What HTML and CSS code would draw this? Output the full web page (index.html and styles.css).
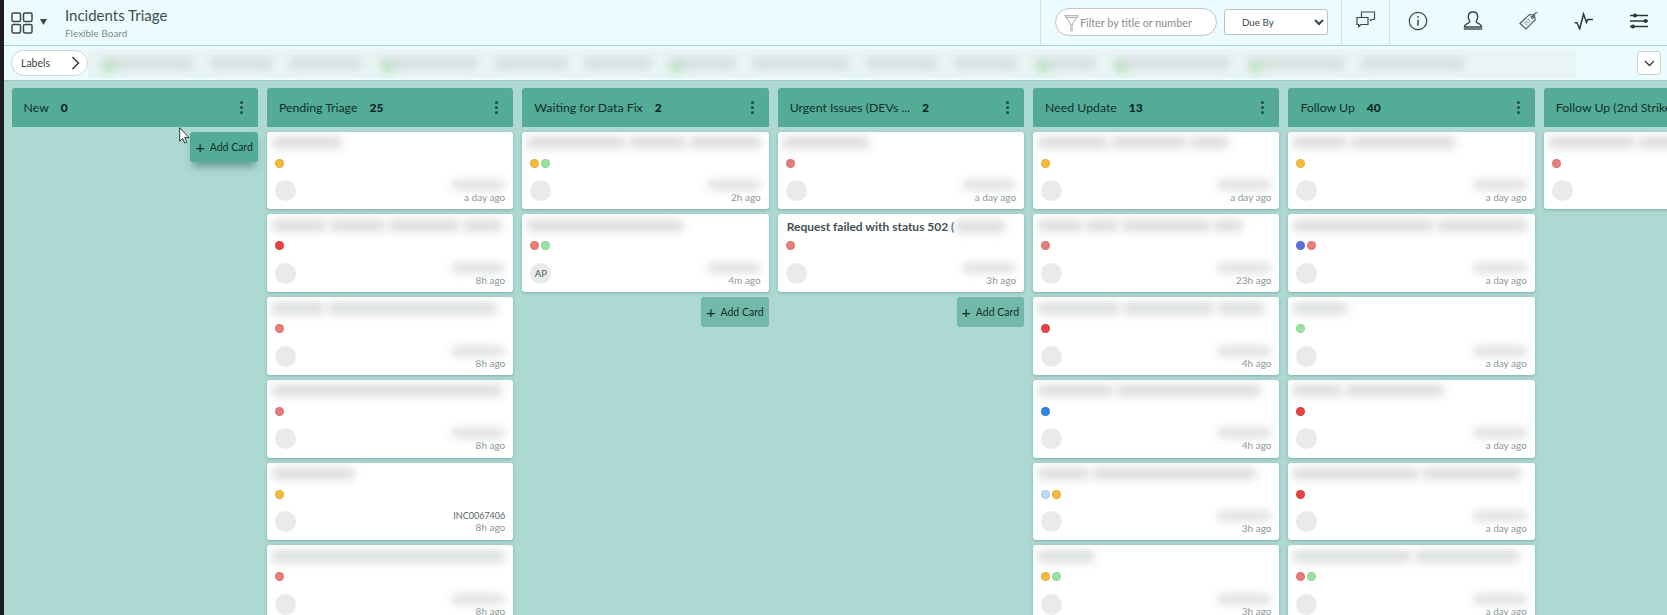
FILE: index.html
```html
<!DOCTYPE html>
<html lang="en">
<head>
<meta charset="utf-8">
<title>Incidents Triage</title>
<link rel="stylesheet" href="styles.css">
</head>
<body>
<div class="page">
  <div class="edge"></div>
  <div class="main">
    <header class="topbar">
      <div class="brand">
        <svg class="board-icon" width="22" height="22" viewBox="0 0 22 22" fill="none" stroke="#39474a" stroke-width="1.5"><rect x="1" y="1" width="8.5" height="8.5" rx="1.5"/><rect x="12.5" y="1" width="8.5" height="8.5" rx="1.5"/><rect x="1" y="12.5" width="8.5" height="8.5" rx="1.5"/><rect x="12.5" y="12.5" width="8.5" height="8.5" rx="1.5"/></svg>
        <svg class="caret" width="7" height="6" viewBox="0 0 7 6"><path d="M0 0h7L3.5 6z" fill="#39474a"/></svg>
        <div class="titles">
          <div class="board-title">Incidents Triage</div>
          <div class="board-sub">Flexible Board</div>
        </div>
      </div>
      <div class="filters">
        <label class="search">
          <svg width="15" height="17" viewBox="0 0 15 17" fill="none" stroke="#a3abab" stroke-width="1"><path d="M.7.7h13.6L8.8 8v2H6.2V8z"/><path d="M2 2.6h11"/><rect x="6" y="10.5" width="3" height="6" fill="#c9cfcf" stroke="none"/></svg>
          <input class="search-input" type="text" placeholder="Filter by title or number">
        </label>
        <select class="sort"><option>Due By</option></select>
      </div>
      <div class="tool-chat">
        <svg width="20" height="17" viewBox="0 0 20 17" fill="none" stroke="#39474a" stroke-width="1.2"><path d="M1 6.5h11v7H5l-2.3 2.2V13.500H1z"/><path d="M5.500 6V1h13v7.500h-2.600"/><path d="M16.500 8.300l-1.600 2.400-1.500-2.400" fill="#39474a" stroke="none"/></svg>
      </div>
      <div class="tools">
        <span class="tool-icon"><svg width="20" height="20" viewBox="0 0 20 20" fill="none" stroke="#39474a" stroke-width="1.200"><circle cx="10" cy="10" r="8.700"/><path d="M10 8.800v6" stroke-width="1.500"/><circle cx="10" cy="5.800" r=".9" fill="#39474a" stroke="none"/></svg></span>
        <span class="tool-icon"><svg width="20" height="19" viewBox="0 0 20 19" fill="none" stroke="#39474a" stroke-width="1.400"><path d="M6.800 10.500c-1-1.500-1.500-3-1.500-4.800C5.300 2.800 7.200 1 10 1s4.700 1.800 4.700 4.700c0 1.800-.5 3.300-1.500 4.800 0 1.300 2 1.800 3.500 2.600 1.200.6 1.800 1.600 1.800 2.900H1.500c0-1.300.6-2.300 1.800-2.900 1.500-.8 3.500-1.300 3.500-2.600z"/><path d="M.8 18h18.400"/></svg></span>
        <span class="tool-icon"><svg width="20" height="20" viewBox="0 0 20 20" fill="none" stroke="#4c5d60" stroke-width="1.200"><path d="M1 12.500L10.500 3.500l5 .5.600 4.800-9 9.200z"/><circle cx="13.300" cy="6.300" r="1.100"/><path d="M13.800 5.600C14.800 3.500 16.500 1.500 18.500 1.500"/><path d="M5.500 11.500l3 3M7.200 9.800l3 3M9 8.200l3 3" stroke-dasharray="1 1"/></svg></span>
        <span class="tool-icon"><svg width="20" height="18" viewBox="0 0 20 18" fill="none" stroke="#27383a" stroke-width="1.500"><path d="M.8 10.800h2.200l2.700 6 3.800-14.800 3 8.300 1.400-2.800h5"/></svg></span>
        <span class="tool-icon"><svg width="20" height="18" viewBox="0 0 20 18" fill="none" stroke="#27383a" stroke-width="1.600"><path d="M0 3.500h18M0 9h18M0 14.500h18"/><circle cx="5" cy="3.500" r="2" fill="#27383a" stroke="none"/><circle cx="15.500" cy="9" r="2" fill="#27383a" stroke="none"/><circle cx="3" cy="14.500" r="2" fill="#27383a" stroke="none"/></svg></span>
      </div>
    </header>

    <div class="labelbar">
      <button class="labels-pill" type="button"><span>Labels</span>
        <svg width="9" height="14" viewBox="0 0 9 14" fill="none" stroke="#333f42" stroke-width="1.500"><path d="M1.500 1l6 6-6 6"/></svg>
      </button>
      <div class="chips">
        <i class="chip tinted" style="width:92px"></i><i class="chip" style="width:61px"></i><i class="chip" style="width:72px"></i><i class="chip tinted" style="width:97px"></i><i class="chip" style="width:72px"></i><i class="chip" style="width:66px"></i><i class="chip tinted" style="width:66px"></i><i class="chip" style="width:96px"></i><i class="chip" style="width:70px"></i><i class="chip" style="width:62px"></i><i class="chip tinted" style="width:60px"></i><i class="chip tinted" style="width:116px"></i><i class="chip tinted" style="width:97px"></i><i class="chip" style="width:102px"></i>
      </div>
      <button class="expand" type="button">
        <svg width="11" height="7" viewBox="0 0 11 7" fill="none" stroke="#333f42" stroke-width="1.400"><path d="M1 1l4.500 4.500L10 1"/></svg>
      </button>
    </div>

    <div class="board">
      <section class="col">
        <div class="col-head"><span class="col-name">New</span><b class="col-count">0</b><span class="kebab"><i></i><i></i><i></i></span></div>
        <button class="add hover" type="button"><span class="plus">+</span>Add Card</button>
      </section>

      <section class="col">
        <div class="col-head"><span class="col-name">Pending Triage</span><b class="col-count">25</b><span class="kebab"><i></i><i></i><i></i></span></div>
        <article class="card"><div class="title"><i class="blob" style="width:72px"></i></div><div class="dots"><i class="dot amber"></i></div><div class="foot"><span class="avatar"></span><div class="meta"><i class="blob id"></i><span class="time">a day ago</span></div></div></article>
        <article class="card"><div class="title"><i class="blob" style="width:56px"></i><i class="blob" style="width:56px"></i><i class="blob" style="width:74px"></i><i class="blob" style="width:40px"></i></div><div class="dots"><i class="dot red"></i></div><div class="foot"><span class="avatar"></span><div class="meta"><i class="blob id"></i><span class="time">8h ago</span></div></div></article>
        <article class="card"><div class="title"><i class="blob" style="width:54px"></i><i class="blob" style="width:170px"></i></div><div class="dots"><i class="dot rose"></i></div><div class="foot"><span class="avatar"></span><div class="meta"><i class="blob id"></i><span class="time">8h ago</span></div></div></article>
        <article class="card"><div class="title"><i class="blob" style="width:232px"></i></div><div class="dots"><i class="dot rose"></i></div><div class="foot"><span class="avatar"></span><div class="meta"><i class="blob id"></i><span class="time">8h ago</span></div></div></article>
        <article class="card"><div class="title"><i class="blob" style="width:84px"></i></div><div class="dots"><i class="dot amber"></i></div><div class="foot"><span class="avatar"></span><div class="meta"><span class="inc">INC0067406</span><span class="time">8h ago</span></div></div></article>
        <article class="card"><div class="title"><i class="blob" style="width:234px"></i></div><div class="dots"><i class="dot rose"></i></div><div class="foot"><span class="avatar"></span><div class="meta"><i class="blob id"></i><span class="time">8h ago</span></div></div></article>
      </section>

      <section class="col">
        <div class="col-head"><span class="col-name">Waiting for Data Fix</span><b class="col-count">2</b><span class="kebab"><i></i><i></i><i></i></span></div>
        <article class="card"><div class="title"><i class="blob" style="width:100px"></i><i class="blob" style="width:58px"></i><i class="blob" style="width:74px"></i></div><div class="dots"><i class="dot amber"></i><i class="dot green"></i></div><div class="foot"><span class="avatar"></span><div class="meta"><i class="blob id"></i><span class="time">2h ago</span></div></div></article>
        <article class="card"><div class="title"><i class="blob" style="width:158px"></i></div><div class="dots"><i class="dot rose"></i><i class="dot green"></i></div><div class="foot"><span class="avatar">AP</span><div class="meta"><i class="blob id"></i><span class="time">4m ago</span></div></div></article>
        <button class="add" type="button"><span class="plus">+</span>Add Card</button>
      </section>

      <section class="col">
        <div class="col-head"><span class="col-name">Urgent Issues (DEVs ...</span><b class="col-count">2</b><span class="kebab"><i></i><i></i><i></i></span></div>
        <article class="card"><div class="title"><i class="blob" style="width:88px"></i></div><div class="dots"><i class="dot rose"></i></div><div class="foot"><span class="avatar"></span><div class="meta"><i class="blob id"></i><span class="time">a day ago</span></div></div></article>
        <article class="card"><div class="title title-real"><span class="title-text">Request failed with status 502 (</span><i class="blob" style="width:52px"></i></div><div class="dots"><i class="dot rose"></i></div><div class="foot"><span class="avatar"></span><div class="meta"><i class="blob id"></i><span class="time">3h ago</span></div></div></article>
        <button class="add" type="button"><span class="plus">+</span>Add Card</button>
      </section>

      <section class="col">
        <div class="col-head"><span class="col-name">Need Update</span><b class="col-count">13</b><span class="kebab"><i></i><i></i><i></i></span></div>
        <article class="card"><div class="title"><i class="blob" style="width:72px"></i><i class="blob" style="width:76px"></i><i class="blob" style="width:40px"></i></div><div class="dots"><i class="dot amber"></i></div><div class="foot"><span class="avatar"></span><div class="meta"><i class="blob id"></i><span class="time">a day ago</span></div></div></article>
        <article class="card"><div class="title"><i class="blob" style="width:46px"></i><i class="blob" style="width:34px"></i><i class="blob" style="width:90px"></i><i class="blob" style="width:30px"></i></div><div class="dots"><i class="dot rose"></i></div><div class="foot"><span class="avatar"></span><div class="meta"><i class="blob id"></i><span class="time">23h ago</span></div></div></article>
        <article class="card"><div class="title"><i class="blob" style="width:84px"></i><i class="blob" style="width:92px"></i><i class="blob" style="width:48px"></i></div><div class="dots"><i class="dot red"></i></div><div class="foot"><span class="avatar"></span><div class="meta"><i class="blob id"></i><span class="time">4h ago</span></div></div></article>
        <article class="card"><div class="title"><i class="blob" style="width:76px"></i><i class="blob" style="width:146px"></i></div><div class="dots"><i class="dot blue"></i></div><div class="foot"><span class="avatar"></span><div class="meta"><i class="blob id"></i><span class="time">4h ago</span></div></div></article>
        <article class="card"><div class="title"><i class="blob" style="width:52px"></i><i class="blob" style="width:166px"></i></div><div class="dots"><i class="dot sky"></i><i class="dot amber"></i></div><div class="foot"><span class="avatar"></span><div class="meta"><i class="blob id"></i><span class="time">3h ago</span></div></div></article>
        <article class="card"><div class="title"><i class="blob" style="width:58px"></i></div><div class="dots"><i class="dot amber"></i><i class="dot green"></i></div><div class="foot"><span class="avatar"></span><div class="meta"><i class="blob id"></i><span class="time">3h ago</span></div></div></article>
      </section>

      <section class="col">
        <div class="col-head"><span class="col-name">Follow Up</span><b class="col-count">40</b><span class="kebab"><i></i><i></i><i></i></span></div>
        <article class="card"><div class="title"><i class="blob" style="width:56px"></i><i class="blob" style="width:106px"></i></div><div class="dots"><i class="dot amber"></i></div><div class="foot"><span class="avatar"></span><div class="meta"><i class="blob id"></i><span class="time">a day ago</span></div></div></article>
        <article class="card"><div class="title"><i class="blob" style="width:142px"></i><i class="blob" style="width:92px"></i></div><div class="dots"><i class="dot indigo"></i><i class="dot rose"></i></div><div class="foot"><span class="avatar"></span><div class="meta"><i class="blob id"></i><span class="time">a day ago</span></div></div></article>
        <article class="card"><div class="title"><i class="blob" style="width:56px"></i></div><div class="dots"><i class="dot green"></i></div><div class="foot"><span class="avatar"></span><div class="meta"><i class="blob id"></i><span class="time">a day ago</span></div></div></article>
        <article class="card"><div class="title"><i class="blob" style="width:50px"></i><i class="blob" style="width:100px"></i></div><div class="dots"><i class="dot red"></i></div><div class="foot"><span class="avatar"></span><div class="meta"><i class="blob id"></i><span class="time">a day ago</span></div></div></article>
        <article class="card"><div class="title"><i class="blob" style="width:128px"></i><i class="blob" style="width:100px"></i></div><div class="dots"><i class="dot red"></i></div><div class="foot"><span class="avatar"></span><div class="meta"><i class="blob id"></i><span class="time">a day ago</span></div></div></article>
        <article class="card"><div class="title"><i class="blob" style="width:120px"></i><i class="blob" style="width:106px"></i></div><div class="dots"><i class="dot rose"></i><i class="dot green"></i></div><div class="foot"><span class="avatar"></span><div class="meta"><i class="blob id"></i><span class="time">a day ago</span></div></div></article>
      </section>

      <section class="col">
        <div class="col-head"><span class="col-name">Follow Up (2nd Strike</span></div>
        <article class="card"><div class="title"><i class="blob" style="width:88px"></i><i class="blob" style="width:74px"></i></div><div class="dots"><i class="dot rose"></i></div><div class="foot"><span class="avatar"></span></div></article>
      </section>

      <svg class="cursor" width="11" height="17" viewBox="0 0 11 17"><path d="M.7.7v13.500l3-2.800 2 4.600 2-.9-2-4.500h4.300z" fill="#fff" stroke="#2c3a3c" stroke-width="1"/></svg>
    </div>
  </div>
</div>
</body>
</html>
```

FILE: styles.css
```css
* { box-sizing: border-box; }
html, body { margin: 0; height: 100%; overflow: hidden; }
body { font-family: "Lato", "Noto Sans", sans-serif; color: #39474a; background: #aed8d2; }

.page { display: flex; height: 615px; width: 1667px; overflow: hidden; }
.edge { flex: 0 0 4px; background: #1c1c1e; }
.main { flex: 1; min-width: 0; display: flex; flex-direction: column; }

/* top bar */
.topbar {
  flex: 0 0 46px;
  display: flex;
  align-items: stretch;
  background: #ecfcfe;
  border-bottom: 1px solid #a9d6d0;
}
.brand { flex: 0 0 1036px; display: flex; align-items: center; padding-left: 7px; }
.board-icon { flex: none; }
.caret { flex: none; margin: 0 0 1px 7px; }
.titles { margin-left: 18px; }
.board-title { font-size: 15px; line-height: 19px; color: #3f4d50; }
.board-sub { font-size: 10px; line-height: 13px; margin-top: 2px; color: #7f8b8d; }

.filters {
  flex: 0 0 301px;
  display: flex;
  align-items: center;
  gap: 7px;
  padding: 0 0 1px 14px;
  border-left: 1px solid #cfe2e3;
}
.search {
  width: 162px;
  height: 28px;
  display: flex;
  align-items: center;
  gap: 1px;
  padding-left: 8px;
  background: #fff;
  border: 1px solid #bcc9c9;
  border-radius: 14px;
}
.search svg { flex: none; margin-top: 2px; }
.search-input {
  flex: 1;
  min-width: 0;
  border: 0;
  outline: 0;
  padding: 0;
  background: transparent;
  font: 10.800px "Lato", sans-serif;
}
.search-input::placeholder { color: #858f91; opacity: 1; }
.sort {
  width: 104px;
  height: 26px;
  padding-left: 13px;
  background: #fff;
  border: 1px solid #b7c4c4;
  border-radius: 3px;
  font: 9.800px "Lato", sans-serif;
  color: #39474a;
}
.tool-chat {
  flex: 0 0 49px;
  display: flex;
  align-items: center;
  justify-content: center;
  padding-bottom: 6px;
  border-left: 1px solid #cfe2e3;
}
.tools {
  flex: 1;
  display: flex;
  align-items: center;
  padding: 0 9px 4px 0;
  margin-left: -1px;
  border-left: 1px solid #cfe2e3;
}
.tool-icon { flex: 0 0 55.500px; display: flex; justify-content: center; }

/* labels row */
.labelbar {
  flex: 0 0 35px;
  display: flex;
  align-items: center;
  background: #ecfcfe;
  border-bottom: 1px solid #9cc9c3;
}
.labels-pill {
  flex: none;
  width: 77px;
  height: 26px;
  margin-left: 7px;
  display: flex;
  align-items: center;
  justify-content: space-between;
  padding: 0 7px 0 9px;
  background: #fff;
  border: 1px solid #cdd8d8;
  border-radius: 13px;
  font: 10.500px "Lato", sans-serif;
  color: #39474a;
}
.chips {
  flex: 0 0 1488px;
  height: 29px;
  display: flex;
  align-items: center;
  gap: 18px;
  padding-left: 13px;
  overflow: hidden;
  background: #e9f5f5;
}
.chip {
  position: relative;
  flex: none;
  height: 13px;
  background: #d9e0e0;
  filter: blur(4.500px);
}
.chip.tinted::before {
  content: "";
  position: absolute;
  left: 3px;
  top: 5px;
  width: 10px;
  height: 11px;
  background: #b4e5bb;
}
.expand {
  flex: none;
  width: 24px;
  height: 24px;
  margin-left: 61px;
  padding: 0;
  display: flex;
  align-items: center;
  justify-content: center;
  background: #fff;
  border: 1px solid #c6d2d2;
  border-radius: 3px;
}

/* board */
.board {
  position: relative;
  flex: 1;
  min-height: 0;
  display: flex;
  gap: 9px;
  padding: 7px 0 0 7.500px;
  overflow: hidden;
  background: #aed8d2;
}
.col {
  flex: 0 0 246.400px;
  min-width: 0;
  display: flex;
  flex-direction: column;
  align-items: stretch;
  gap: 5px;
}
.col-head {
  flex: none;
  height: 38.500px;
  display: flex;
  align-items: center;
  padding: 0 12px;
  background: #54ab97;
  border-radius: 3px 3px 0 0;
  color: #10302b;
  white-space: nowrap;
  overflow: hidden;
}
.col-name { font-size: 12.300px; }
.col-count { margin-left: 12px; font-size: 12px; font-weight: 900; color: #0b2622; }
.kebab {
  margin-left: auto;
  margin-right: 3px;
  display: flex;
  flex-direction: column;
  gap: 2px;
}
.kebab i { width: 3px; height: 3px; border-radius: 50%; background: #264d47; }

.card {
  flex: none;
  height: 77.800px;
  padding: 0 8px;
  background: #fff;
  border-radius: 3px;
  box-shadow: 0 1px 3px rgba(30, 100, 90, .35);
  overflow: hidden;
}
.title {
  height: 27px;
  display: flex;
  align-items: center;
  gap: 2px;
  margin-left: -4px;
  padding-bottom: 5px;
  white-space: nowrap;
}
.title-real { margin-left: 1px; padding-bottom: 3px; gap: 0; }
.title-text { font-size: 12px; font-weight: 700; color: #454f52; }
.blob {
  flex: none;
  display: block;
  height: 13px;
  background: #dde0e1;
  border-radius: 6px;
  filter: blur(4.500px);
}
.dots { display: flex; gap: 1.500px; height: 9px; }
.dot { width: 9px; height: 9px; border-radius: 50%; border: 1px solid rgba(0, 0, 0, .08); }
.amber { background: #f5ba3c; }
.green { background: #9ae2a2; }
.rose { background: #e87c7a; }
.red { background: #e84343; }
.blue { background: #2b86ea; }
.indigo { background: #5d70dc; }
.sky { background: #bcdaf4; }

.foot {
  margin-top: 12.500px;
  height: 22px;
  display: flex;
  align-items: flex-start;
  justify-content: space-between;
}
.avatar {
  flex: none;
  width: 21px;
  height: 21px;
  display: flex;
  align-items: center;
  justify-content: center;
  border-radius: 50%;
  background: #e9eaec;
  font-size: 9.500px;
  color: #4d5a5d;
}
.meta { display: flex; flex-direction: column; align-items: flex-end; }
.meta .id { width: 54px; height: 10px; margin: 0 0 1px; }
.inc { font-size: 9px; line-height: 10px; color: #596568; }
.time { font-size: 10px; line-height: 12px; color: #8d9698; }

.add {
  flex: none;
  align-self: flex-end;
  width: 67.500px;
  height: 30px;
  padding: 0;
  display: flex;
  align-items: center;
  justify-content: center;
  gap: 5px;
  background: #72b9a9;
  border: 0;
  border-radius: 3px;
  font: 10.500px "Lato", sans-serif;
  color: #10302b;
}
.add.hover { background: #54ab97; box-shadow: 0 7px 9px -3px rgba(30, 90, 80, .55); }
.plus { font-size: 16px; line-height: 1; }

.cursor { position: absolute; left: 175px; top: 46px; }
```
